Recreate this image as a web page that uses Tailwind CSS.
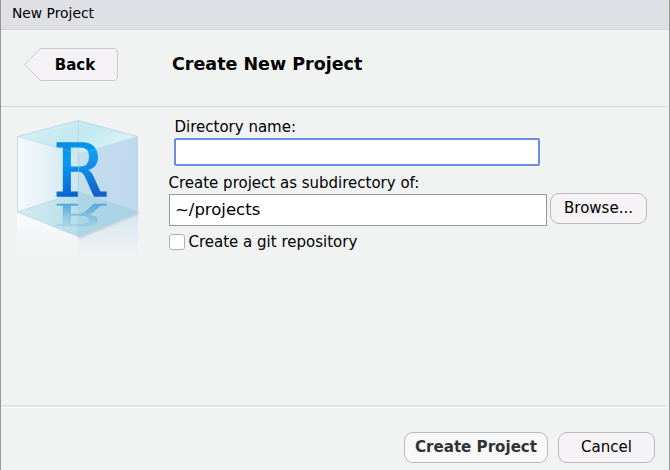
<!DOCTYPE html>
<html lang="en">
<head>
<meta charset="utf-8">
<title>New Project</title>
<script src="https://cdn.jsdelivr.net/npm/@tailwindcss/browser@4"></script>
</head>
<body class="h-[470px] w-[670px] overflow-hidden bg-[#f1f3f3] font-['DejaVu_Sans',sans-serif] text-[15px] leading-5 text-black">
<div class="flex h-[470px] w-[670px] flex-col border-x border-[#979797]">
  <div class="flex h-[30px] shrink-0 items-center border-b border-[#d3d5d8] bg-[#dfe0e5] pb-[3px] pl-[11px] text-[13.85px]">New Project</div>
  <header class="mr-[3px] flex h-[77px] shrink-0 items-start border-b border-[#d4d7d7] pt-[18px] pl-[23px]">
    <button class="grid h-[33px] w-[95px]">
      <svg class="col-start-1 row-start-1" width="95" height="33" viewBox="0 0 95 33"><path d="M.7 16.5 16.5.5H90Q93.500.5 93.500 4V29Q93.500 32.500 90 32.500H16.500Z" fill="#f4f2f5" stroke="#c9cbcb"/></svg>
      <span class="col-start-1 row-start-1 self-center pl-[7px] text-center font-bold">Back</span>
    </button>
    <h1 class="ml-[53px] pt-[6px] text-[17.5px] font-bold">Create New Project</h1>
  </header>
  <main class="mr-[3px] flex h-[300px] shrink-0 border-b-2 border-[#dfe2e1]">
    <svg class="shrink-0" width="160" height="160" viewBox="1 107 160 160">
      <defs>
        <linearGradient id="left"><stop stop-color="#f4f9fc"/><stop offset=".35" stop-color="#e9f4f8"/><stop offset="1" stop-color="#cbe6ee"/></linearGradient>
        <linearGradient id="right" x1="0" y1="0" x2="1" y2=".25"><stop stop-color="#c8e4ef"/><stop offset=".5" stop-color="#c6dcef"/><stop offset="1" stop-color="#c4dbf0"/></linearGradient>
        <linearGradient id="top" x1="0" y1=".3" x2="1" y2=".7"><stop stop-color="#d6f0f4"/><stop offset=".5" stop-color="#c2e8f0"/><stop offset="1" stop-color="#e0f5f8"/></linearGradient>
        <linearGradient id="floor"><stop stop-color="#d5edf2"/><stop offset=".5" stop-color="#b8dde9"/><stop offset="1" stop-color="#b3d6e8"/></linearGradient>
        <linearGradient id="letter" gradientUnits="userSpaceOnUse" x1="20" y1="-55" x2="36" y2="0"><stop stop-color="#078ee6"/><stop offset=".3" stop-color="#069bf2"/><stop offset=".65" stop-color="#087de0"/><stop offset="1" stop-color="#0559c8"/></linearGradient>
        <linearGradient id="mirror" gradientUnits="userSpaceOnUse" x1="0" y1="0" x2="0" y2="-56"><stop stop-color="#1689d0"/><stop offset="1" stop-color="#6fb5da" stop-opacity=".35"/></linearGradient>
        <linearGradient id="fade" x2="0" y2="1"><stop stop-color="#cfe2ef" stop-opacity=".8"/><stop offset=".55" stop-color="#dae8f2" stop-opacity=".5"/><stop offset="1" stop-color="#f1f3f3" stop-opacity="0"/></linearGradient>
        <linearGradient id="fadeLeft" x2="0" y2="1"><stop stop-color="#fafcfe"/><stop offset="1" stop-color="#f1f3f3" stop-opacity="0"/></linearGradient>
        <filter id="soft"><feGaussianBlur stdDeviation="1"/></filter>
      </defs>
      <path d="M17 212 78.500 237V262L17 254Z" fill="url(#fadeLeft)"/>
      <path d="M78.500 237 138 212V254L78.500 262Z" fill="url(#fade)"/>
      <path d="M78.500 237.500 139 212.500" stroke="#a5a8c4" stroke-width="1.400" opacity=".8" filter="url(#soft)"/>
      <path d="M17.500 136.500 78.500 154V236.500L17.500 212Z" fill="url(#left)"/>
      <path d="M78.500 154 137.500 136.500V212L78.500 236.500Z" fill="url(#right)"/>
      <path d="M17.500 136.500 78.500 120.500 137.500 136.500 78.500 154Z" fill="url(#top)"/>
      <path d="M17.500 212 78.500 192 137.500 212 78.500 236.500Z" fill="url(#floor)"/>
      <path d="M78.500 192V236.500L137.500 212Z" fill="#9dcbe2" opacity=".3"/>
      <path d="M78.500 192V121M17.500 212 78.500 192 137.500 212" fill="none" stroke="#a6cbd8" stroke-width=".8" opacity=".6"/>
      <text transform="matrix(.92 0 0 -.41 53.500 203.500)" font-family="DejaVu Serif, serif" font-size="73.500" fill="url(#mirror)" stroke="url(#mirror)" stroke-width="1.400" opacity=".65">R</text>
      <text transform="translate(53.500 196.300) scale(.92 1)" font-family="DejaVu Serif, serif" font-size="73.500" fill="url(#letter)" stroke="url(#letter)" stroke-width="1.400">R</text>
      <path d="M78.500 154 137.500 136.500V212L78.500 236.500Z" fill="#9fc8e8" opacity=".08"/>
      <path d="M17.500 136.500 78.500 120.500 137.500 136.500M17.500 136.500V212L78.500 236.500 137.500 212V136.500M78.500 154V236.500" fill="none" stroke="#9fd3da" stroke-width=".9" opacity=".7"/>
      <path d="M17.500 136.500 78.500 154 137.500 136.500" fill="none" stroke="#9fd3da" stroke-width=".9" opacity=".35"/>
    </svg>
    <div class="flex flex-col items-start pt-[10px] pl-[8px]">
      <label class="ml-[5.500px]">Directory name:</label>
      <input class="mt-[1px] ml-[5px] h-[28px] w-[366px] rounded-[2px] border-2 border-[#6c8be8] bg-white outline-none">
      <label class="mt-[7px] -ml-[.5px]">Create project as subdirectory of:</label>
      <div class="flex items-start">
        <input class="mt-[1px] h-[32px] w-[378px] border border-[#979999] bg-white pb-[2px] pl-[5px] text-[16.5px] outline-none" value="~/projects">
        <button class="ml-[3px] h-[31px] w-[97px] rounded-[9px] border border-[#bbb9bc] bg-[#f5f3f6] pb-[1px]">Browse...</button>
      </div>
      <label class="mt-[6px] flex items-center"><span class="mr-[3.500px] h-[16px] w-[16px] rounded-[3px] border border-[#b1b2b2] bg-white"></span>Create a git repository</label>
    </div>
  </main>
  <footer class="mr-[3px] flex grow items-start justify-end gap-[10px] border-t border-white pt-[24px] pr-[11px]">
    <button class="h-[31px] w-[144px] rounded-[9px] border border-[#bbb9bc] bg-[#f8f8f9] pb-[1px] text-[15.1px] font-bold text-[#303233]">Create Project</button>
    <button class="h-[31px] w-[97px] rounded-[9px] border border-[#bbb9bc] bg-[#f5f3f6] pb-[1px]">Cancel</button>
  </footer>
</div>
</body>
</html>
